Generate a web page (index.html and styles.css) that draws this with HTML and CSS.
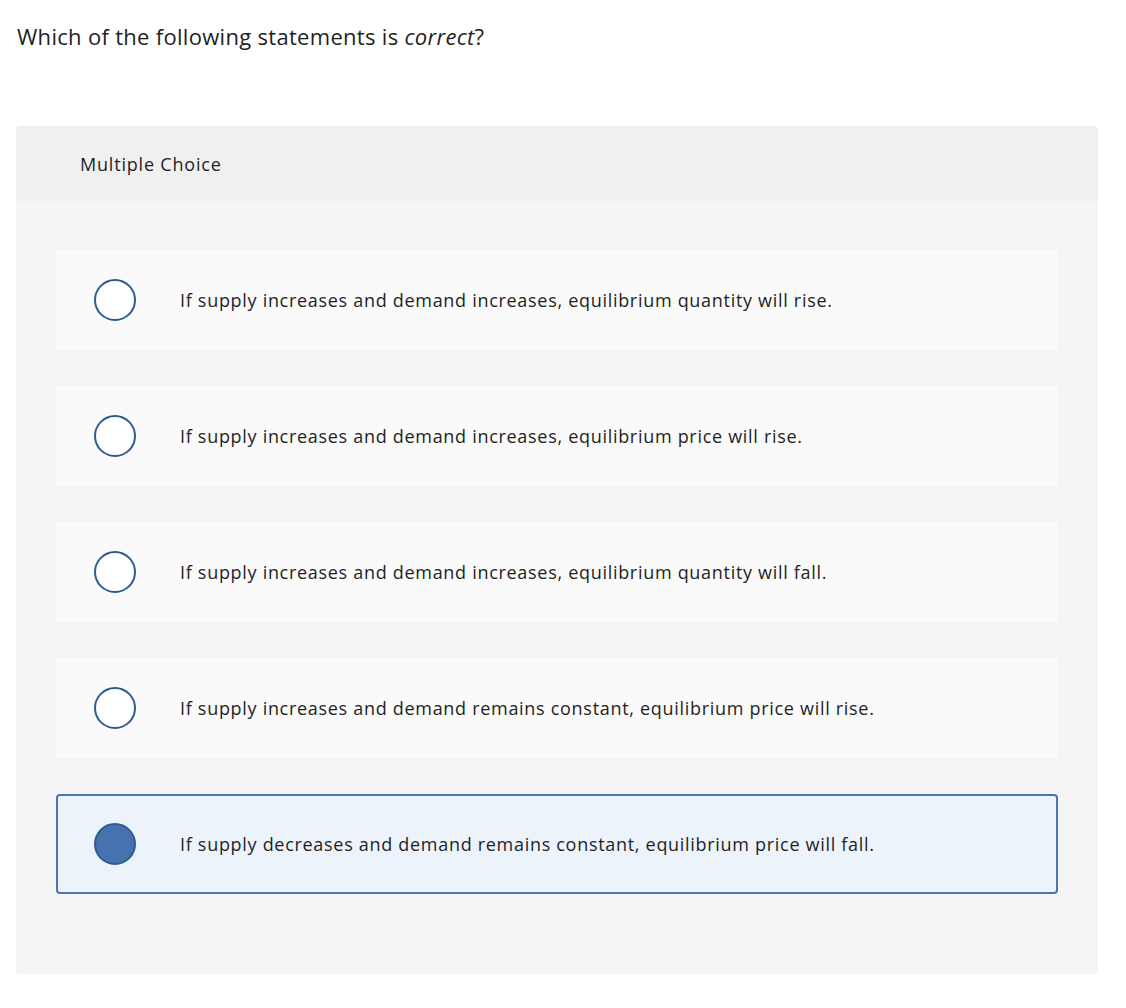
FILE: index.html
```html
<!DOCTYPE html>
<html>
<head>
<meta charset="utf-8">
<link rel="stylesheet" href="styles.css">
</head>
<body>
<div class="page">
  <p class="question">Which of the following statements is <em>correct</em>?</p>
  <div class="card">
    <div class="card-header">Multiple Choice</div>
    <div class="card-body">
      <div class="option"><span class="radio"></span><span class="label">If supply increases and demand increases, equilibrium quantity will rise.</span></div>
      <div class="option"><span class="radio"></span><span class="label">If supply increases and demand increases, equilibrium price will rise.</span></div>
      <div class="option"><span class="radio"></span><span class="label">If supply increases and demand increases, equilibrium quantity will fall.</span></div>
      <div class="option"><span class="radio"></span><span class="label">If supply increases and demand remains constant, equilibrium price will rise.</span></div>
      <div class="option selected"><span class="radio"></span><span class="label">If supply decreases and demand remains constant, equilibrium price will fall.</span></div>
    </div>
  </div>
</div>
</body>
</html>
```
FILE: styles.css
```css
html, body {
  margin: 0;
  padding: 0;
  background: #ffffff;
}
body {
  font-family: "Open Sans", "Liberation Sans", sans-serif;
  color: #1f1f1f;
}
.page {
  padding: 0 28px 0 16px;
}
.question {
  margin: 0;
  padding: 21px 0 0 1px;
  height: 126px;
  box-sizing: border-box;
  font-size: 22px;
  line-height: 30px;
  letter-spacing: 0.3px;
}
.question em {
  font-style: italic;
}
.card {
  background: #f5f5f5;
  border-radius: 4px;
  overflow: hidden;
}
.card-header {
  background: #f0f0f0;
  height: 75px;
  display: flex;
  align-items: center;
  padding-left: 64px;
  font-size: 18px;
  letter-spacing: 0.8px;
}
.card-body {
  padding: 49px 40px 80px;
  display: flex;
  flex-direction: column;
  gap: 36px;
}
.option {
  height: 100px;
  box-sizing: border-box;
  background: #fafafa;
  border-radius: 4px;
  display: flex;
  align-items: center;
  padding-left: 36px;
  border: 2px solid transparent;
}
.option.selected {
  background: #ecf3fb;
  border-color: #4a76b3;
}
.radio {
  width: 42px;
  height: 42px;
  box-sizing: border-box;
  border-radius: 50%;
  border: 2px solid #2f5b8e;
  background: #ffffff;
  flex: none;
}
.option.selected .radio {
  background: #4672b0;
}
.label {
  margin-left: 44px;
  font-size: 18px;
  letter-spacing: 0.7px;
}
```
